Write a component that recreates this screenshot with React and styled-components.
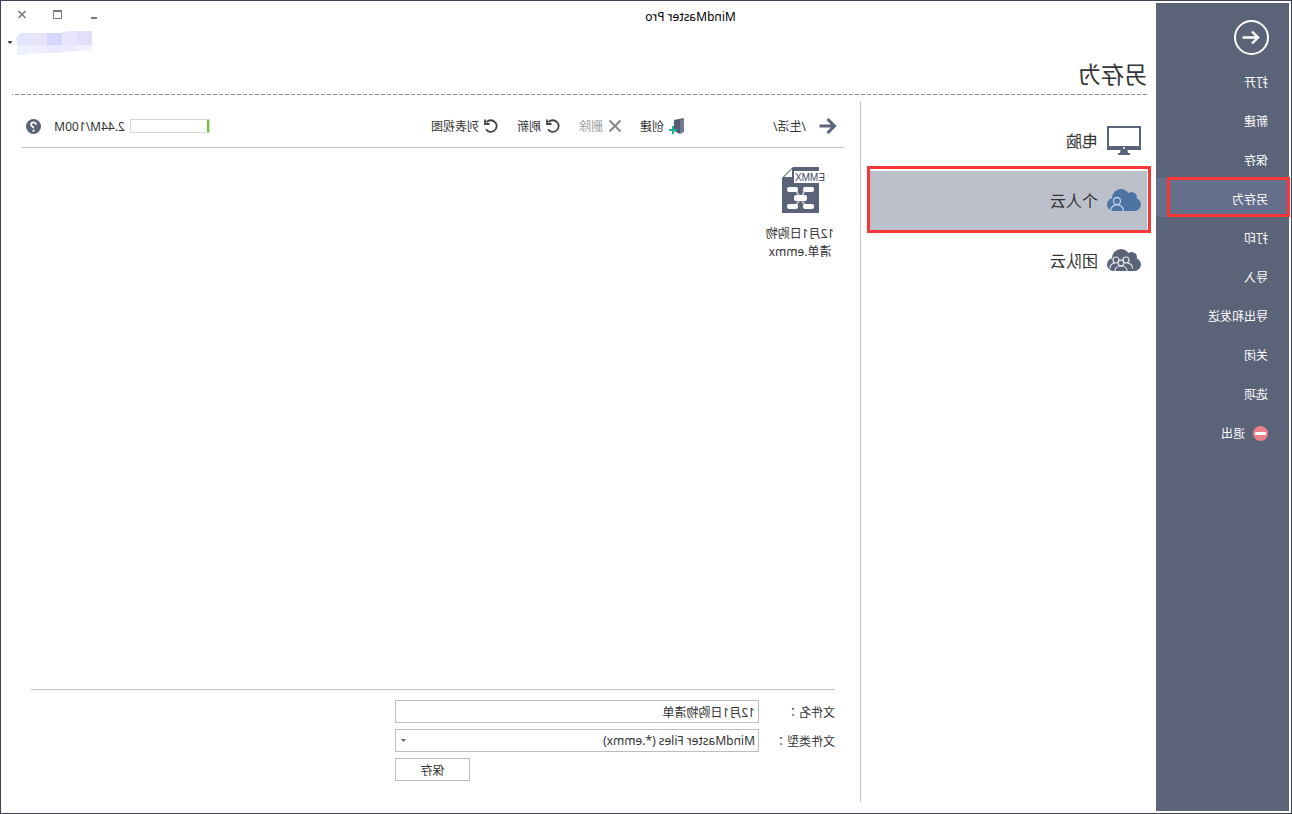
import React, { useState } from 'react'
import styled, { createGlobalStyle } from 'styled-components';

const menuItems = ['打开', '新建', '保存', '另存为', '打印', '导入', '导出和发送', '关闭', '选项', '退出'];

function App() {
    const [page, setPage] = useState('另存为');
    const [place, setPlace] = useState('个人云');
    const [fileName, setFileName] = useState('12月1日购物清单');
    const used = 2.44;
    const total = 100;

    return (
        <Window>
            <GlobalStyle />
            <Sidebar>
                <BackButton aria-label="返回">
                    <BackCircle />
                </BackButton>
                {menuItems.map((item) => (
                    <MenuItem key={item} $active={item === page} onClick={() => setPage(item)}>
                        {item === '退出' && <ExitIcon />}
                        {item}
                    </MenuItem>
                ))}
            </Sidebar>

            <Main>
                <TitleBar>
                    <AppName>MindMaster Pro</AppName>
                    <WindowButtons>
                        <WindowButton aria-label="最小化">
                            <svg width="10" height="10"><path d="M2 8h6" stroke="#777" strokeWidth="2" /></svg>
                        </WindowButton>
                        <WindowButton aria-label="最大化">
                            <svg width="10" height="10"><path d="M1.5 1.5h8v7h-8z M1 .5h9" stroke="#777" fill="none" /></svg>
                        </WindowButton>
                        <WindowButton aria-label="关闭窗口">
                            <svg width="10" height="10"><path d="M1.5 1l7 7M8.5 1l-7 7" stroke="#777" strokeWidth="1.5" /></svg>
                        </WindowButton>
                    </WindowButtons>
                </TitleBar>
                <UserRow>
                    <UserButton aria-label="账户">
                        <UserMosaic />
                    </UserButton>
                </UserRow>
                <Heading>另存为</Heading>
                <Dashes />

                <Content>
                    <Places>
                        <Place $active={place === '电脑'} onClick={() => setPlace('电脑')}>
                            <ComputerIcon />
                            电脑
                        </Place>
                        <Place $active={place === '个人云'} onClick={() => setPlace('个人云')}>
                            <CloudIcon color="#4e73a3">
                                <g fill="none" stroke="#bcd4f0" strokeWidth="1.3">
                                    <circle cx="24" cy="12" r="3.5" />
                                    <path d="M17.5 22c0-3.8 3-6.3 6.5-6.3s6.5 2.5 6.5 6.3" />
                                </g>
                            </CloudIcon>
                            个人云
                        </Place>
                        <Place $active={place === '团队云'} onClick={() => setPlace('团队云')}>
                            <CloudIcon color="#5b6378">
                                <g fill="none" stroke="#e6e8ee" strokeWidth="1.2">
                                    <circle cx="25" cy="11" r="3" />
                                    <circle cx="15" cy="11" r="3" />
                                    <path d="M8.5 19.5c0-3.5 2-5.2 5.500-5.500M31 19.500c0-3.500-2-5.200-5-5.500" />
                                    <circle cx="20" cy="14" r="2.8" fill="#5b6378" />
                                    <path d="M14 22c0-3 2.500-5 6-5s6 2 6 5" />
                                </g>
                            </CloudIcon>
                            团队云
                        </Place>
                    </Places>

                    <Browser>
                        <Toolbar>
                            <UpButton aria-label="上一级">
                                <svg width="18" height="16" fill="none" stroke="#5b6378" strokeWidth="3">
                                    <path d="M17.5 8H2.5M9.5 1L2.5 8l7 7" />
                                </svg>
                            </UpButton>
                            <Path>/生活/</Path>
                            <ToolButton><CreateIcon />创建</ToolButton>
                            <ToolButton $muted>
                                <svg width="15" height="14"><path d="M1.5 1.5l11 11M12.5 1.5l-11 11" stroke="#888" strokeWidth="2" /></svg>
                                删除
                            </ToolButton>
                            <ToolButton><RefreshIcon />刷新</ToolButton>
                            <ToolButton><RefreshIcon />列表视图</ToolButton>
                            <Storage>
                                <Bar role="progressbar" aria-label="已用空间" aria-valuenow={used} aria-valuemax={total}>
                                    <BarFill style={{ width: (used / total) * 100 + '%' }} />
                                </Bar>
                                <Usage>{used}M/{total}M</Usage>
                                <HelpButton aria-label="帮助"><HelpIcon /></HelpButton>
                            </Storage>
                        </Toolbar>

                        <Files>
                            <FileItem>
                                <FileIcon />
                                <FileName>12月1日购物清单.emmx</FileName>
                            </FileItem>
                        </Files>

                        <SaveForm onSubmit={(e) => e.preventDefault()}>
                            <Label htmlFor="name">文件名：</Label>
                            <NameInput id="name" value={fileName} onChange={(e) => setFileName(e.target.value)} />
                            <Label htmlFor="type">文件类型：</Label>
                            <SelectWrap>
                                <TypeSelect id="type">
                                    <option>MindMaster Files (*.emmx)</option>
                                </TypeSelect>
                                <SelectArrow width="5" height="3"><path d="M0 0h5L2.5 3z" fill="#666" /></SelectArrow>
                            </SelectWrap>
                            <SaveButton>保存</SaveButton>
                        </SaveForm>
                    </Browser>
                </Content>
            </Main>
        </Window>
    )
}

export default App;

function BackCircle() {
    return (
        <svg width="35" height="35" fill="none" stroke="#fff" strokeWidth="2">
            <circle cx="17.5" cy="17.5" r="16.5" />
            <path d="M26.5 17.5H10M17 11.5l-6 6 6 6" strokeWidth="2.4" />
        </svg>
    )
}

function ExitIcon() {
    return (
        <svg width="15" height="15">
            <circle cx="7.5" cy="7.5" r="7.5" fill="#ef7f8b" />
            <rect x="2" y="6" width="11" height="3" fill="#fff" />
        </svg>
    )
}

function UserMosaic() {
    return (
        <svg width="85" height="25">
            <path d="M0 1l1-1h14v14H0z" fill="#e2dffb" />
            <path d="M15 0h6l9 1v13H15z" fill="#e8e5fc" />
            <path d="M30 2h15v12H30z" fill="#d4d6fe" />
            <path d="M45 2h15v12H45z" fill="#eae4fb" />
            <path d="M60 2h11l4 3v9H60z" fill="#e4e6fd" />
            <path d="M75 6l5 8h-5z" fill="#f6f6f8" />
            <path d="M0 14h15v6H1l-1-1z" fill="#f2f0fe" />
            <path d="M15 14h15v7l-15-1z" fill="#ebe9fd" />
            <path d="M30 14h15v8H30z" fill="#e9e8fe" />
            <path d="M45 14h15v8H45z" fill="#f0ecfd" />
            <path d="M60 14h15v10h-6l-9-2z" fill="#eeeffe" />
            <path d="M80 10h4v1l-2 2-2-2z" fill="#3f4254" />
        </svg>
    )
}

function ComputerIcon() {
    return (
        <svg width="34" height="29">
            <path d="M1 1h32v22H1z" fill="#fff" stroke="#5b6378" strokeWidth="2" />
            <path d="M0 20h34v4H0z" fill="#5b6378" />
            <path d="M13.5 24h7l.5 3h2v2H11v-2h2z" fill="#5b6378" />
            <path d="M16 21h2v2h-2z" fill="#cfd2da" />
        </svg>
    )
}

function CloudIcon({ color, children }) {
    return (
        <svg width="34" height="22" viewBox="0 0 34 22">
            <g fill={color}>
                <circle cx="6.5" cy="15.5" r="6.5" />
                <circle cx="9.5" cy="8.5" r="5.5" />
                <circle cx="20" cy="9" r="9" />
                <circle cx="27.5" cy="15.5" r="6.5" />
                <path d="M6.5 11h21v11h-21z" />
            </g>
            {children}
        </svg>
    )
}

function CreateIcon() {
    return (
        <svg width="16" height="16">
            <path d="M0 0l10 2v11l-6 3z" fill="#535a70" />
            <path d="M0 0l4 3v13l-4-2z" fill="#747c94" />
            <path d="M7 12h8M11 8v8" stroke="#15b596" strokeWidth="2" />
        </svg>
    )
}

function RefreshIcon() {
    return (
        <svg width="16" height="14" fill="none" stroke="#444" strokeWidth="1.8">
            <path d="M12.5 3.2A5.8 5.8 0 1 0 13 10.300" />
            <path d="M14 .5v4.500h-4.500" />
        </svg>
    )
}

function HelpIcon() {
    return (
        <svg width="15" height="15">
            <circle cx="7.5" cy="7.5" r="7.5" fill="#5b6378" />
            <path d="M5 5.7C5 2.5 10.2 2.7 10 5.7 9.9 7.2 7.5 7.3 7.5 9.2" fill="none" stroke="#fff" strokeWidth="1.8" />
            <circle cx="7.5" cy="11.7" r="1.1" fill="#fff" />
        </svg>
    )
}

function FileIcon() {
    return (
        <svg width="51" height="46">
            <path d="M6 0h26l11 11v35H6z" fill="#5b6378" />
            <path d="M32.5 1v9.5H42z" fill="#fff" stroke="#5b6378" />
            <path d="M0 4h31v12H0z" fill="#fff" />
            <path d="M19 22l11 18M30 22L19 40" stroke="#b9bdc9" strokeWidth="2" />
            <g fill="#fff">
                <rect x="11" y="20" width="11" height="5" rx="2" />
                <rect x="27" y="20" width="11" height="5" rx="2" />
                <rect x="18" y="28" width="13" height="6" rx="2" />
                <rect x="11" y="37" width="11" height="5" rx="2" />
                <rect x="27" y="37" width="11" height="5" rx="2" />
            </g>
            <text x="0" y="14" fontFamily="Liberation Sans, sans-serif" fontSize="10" fill="#3f4660">EMMX</text>
        </svg>
    )
}

const GlobalStyle = createGlobalStyle`
    * {
        box-sizing: border-box;
    }
    body {
        margin: 0;
        background: #fff;
    }
    body, button, input, select {
        font-family: "Noto Sans", "Noto Sans CJK SC", sans-serif;
        font-size: 12px;
        color: #333;
    }
    button {
        padding: 0;
        border: 0;
        background: none;
        cursor: pointer;
    }
    svg {
        display: block;
        flex-shrink: 0;
    }
`
/* the whole window is flipped left to right */
const Window = styled.div`
    display: flex;
    min-height: 100vh;
    padding: 2px;
    border: 1px solid #3f4254;
    transform: scaleX(-1);
`
const Sidebar = styled.nav`
    display: flex;
    flex-direction: column;
    width: 133px;
    flex-shrink: 0;
    padding-top: 17px;
    background: #5b6378;
`
const BackButton = styled.button`
    margin: 0 0 6px 20px;
    align-self: flex-start;
`
const MenuItem = styled.button`
    position: relative;
    display: flex;
    align-items: center;
    gap: 8px;
    height: 39px;
    padding: 3px 0 0 21px;
    color: #fff;
    background: ${props => props.$active ? '#656f8c' : 'transparent'};

    &::after {
        content: '';
        display: ${props => props.$active ? 'block' : 'none'};
        position: absolute;
        inset: -1px 11px 0 -1px;
        border: 3px solid #fb3636;
    }
`
const Main = styled.main`
    display: flex;
    flex-direction: column;
    flex: 1;
    min-width: 0;
    padding-bottom: 9px;
`
const TitleBar = styled.header`
    display: flex;
    align-items: center;
    height: 27px;
`
const AppName = styled.div`
    flex: 1;
    text-align: center;
    color: #000;
`
const WindowButtons = styled.div`
    display: flex;
    justify-content: flex-end;
    gap: 26px;
    width: 222px;
    padding: 0 14px 4px 0;
`
const WindowButton = styled.button`
    width: 10px;
`
const UserRow = styled.div`
    display: flex;
    justify-content: flex-end;
    height: 25px;
    padding: 1px 4px 0 0;
`
const UserButton = styled.button`
    height: 25px;
`
const Heading = styled.h1`
    margin: 0;
    padding-left: 9px;
    font-size: 23px;
    font-weight: 400;
    line-height: 39px;
`
const Dashes = styled.div`
    height: 1px;
    margin: 0 9px;
    background: repeating-linear-gradient(to right, #8a8a8a 0 4px, transparent 4px 6px);
`
const Content = styled.div`
    display: flex;
    flex: 1;
    margin-top: 6px;
`
const Places = styled.div`
    width: 296px;
    flex-shrink: 0;
    padding: 10px 9px 0;
    border-right: 1px solid #c3c3c3;
`
const Place = styled.button`
    position: relative;
    display: flex;
    align-items: center;
    gap: 9px;
    width: 100%;
    height: 60px;
    padding: 0 0 2px 6px;
    font-size: 16px;
    background: ${props => props.$active ? '#bcc0cb' : 'transparent'};

    &::after {
        content: '';
        display: ${props => props.$active ? 'block' : 'none'};
        position: absolute;
        inset: -5px -3px -2px -4px;
        border: 3px solid #fb3636;
    }
`
const Browser = styled.section`
    display: flex;
    flex-direction: column;
    flex: 1;
    min-width: 0;
`
const Toolbar = styled.div`
    display: flex;
    align-items: center;
    gap: 18px;
    height: 47px;
    margin: 0 19px 0 16px;
    padding: 4px 4px 0 7px;
    border-bottom: 1px solid #c3c3c3;
`
const UpButton = styled.button`
    margin-right: -5px;
`
const Path = styled.div`
    width: 104px;
`
const ToolButton = styled.button`
    display: flex;
    align-items: center;
    gap: 4px;
    white-space: nowrap;
    color: ${props => props.$muted ? '#999' : '#333'};
`
const Storage = styled.div`
    display: flex;
    align-items: center;
    gap: 3px;
    margin-left: auto;
`
const Bar = styled.div`
    width: 80px;
    height: 14px;
    border: 1px solid #d9d9d9;
`
const BarFill = styled.div`
    height: 100%;
    background: #6cc32c;
`
const Usage = styled.span`
    min-width: 75px;
    text-align: center;
`
const HelpButton = styled.button`
    margin-left: 8px;
`
const Files = styled.div`
    display: flex;
    flex-wrap: wrap;
    align-content: flex-start;
    flex: 1;
    padding: 19px 24px;
`
const FileItem = styled.button`
    display: flex;
    flex-direction: column;
    align-items: center;
    gap: 12px;
    width: 72px;
    align-self: flex-start;
`
const FileName = styled.span`
    line-height: 18px;
    text-align: center;
`
const SaveForm = styled.form`
    display: grid;
    grid-template-columns: 76px minmax(0, 364px);
    grid-auto-rows: 23px;
    row-gap: 6px;
    align-items: center;
    margin: 0 28px 0 25px;
    padding: 10px 0 21px;
    border-top: 1px solid #c3c3c3;
`
const Label = styled.label`
    font-family: "Noto Sans CJK TC", sans-serif;
`
const NameInput = styled.input`
    width: 100%;
    height: 23px;
    padding: 0 3px;
    border: 1px solid #bdbdbd;
    background: #fff;
`
const SelectWrap = styled.div`
    position: relative;
`
const TypeSelect = styled.select`
    display: block;
    width: 100%;
    height: 23px;
    padding: 0 3px;
    border: 1px solid #bdbdbd;
    border-radius: 0;
    background: #fff;
    appearance: none;
`
const SelectArrow = styled.svg`
    position: absolute;
    right: 6px;
    top: 10px;
    pointer-events: none;
`
const SaveButton = styled.button`
    grid-column: 2;
    justify-self: end;
    width: 75px;
    height: 23px;
    border: 1px solid #bdbdbd;
`
